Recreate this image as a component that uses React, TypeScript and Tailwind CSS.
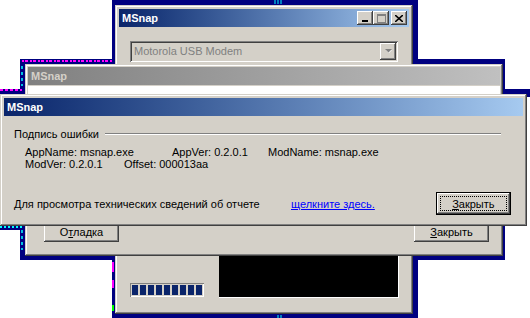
import React from "react";

const raised =
  "shadow-[inset_-1px_-1px_#404040,inset_1px_1px_#d4d0c8,inset_-2px_-2px_#808080,inset_2px_2px_#ffffff]";
const btn =
  "shadow-[inset_-1px_-1px_#404040,inset_1px_1px_#ffffff,inset_-2px_-2px_#808080,inset_2px_2px_#d4d0c8]";
const sunken =
  "shadow-[inset_1px_1px_#808080,inset_-1px_-1px_#ffffff,inset_2px_2px_#404040,inset_-2px_-2px_#d4d0c8]";

function Caption({ active = true }: { active?: boolean }) {
  return (
    <div
      className={`h-[18px] flex items-center pl-[3px] pr-[2px] ${
        active
          ? "bg-gradient-to-r from-[#0a246a] to-[#a6caf0]"
          : "bg-gradient-to-r from-[#808080] to-[#c0c0c0]"
      }`}
    >
      <span
        className={`text-[11px] font-bold leading-none ${
          active ? "text-white" : "text-[#d4d0c8]"
        }`}
      >
        MSnap
      </span>
    </div>
  );
}

function TitleBtn({ children, gap = false }: { children: React.ReactNode; gap?: boolean }) {
  return (
    <div
      className={`w-[16px] h-[14px] bg-[#d4d0c8] flex items-center justify-center ${btn} ${gap ? "ml-[2px]" : ""}`}
    >
      {children}
    </div>
  );
}

function BackWindow() {
  return (
    <div className={`absolute left-[115px] top-[5px] w-[298px] h-[309px] bg-[#d4d0c8] p-[4px] ${raised}`}>
      <div className="h-[18px] flex items-center justify-between pl-[3px] pr-[2px] bg-gradient-to-r from-[#0a246a] to-[#a6caf0]">
        <span className="text-[11px] font-bold leading-none text-white">MSnap</span>
        <div className="flex">
          <TitleBtn>
            <div className="w-[6px] h-[2px] bg-black mt-[6px] -ml-[1px]" />
          </TitleBtn>
          <TitleBtn>
            <div className="w-[9px] h-[9px] border border-[#808080] border-t-2" />
          </TitleBtn>
          <TitleBtn gap>
            <svg width="8" height="7" viewBox="0 0 8 7">
              <path d="M0 0l8 7M8 0L0 7" stroke="#000" strokeWidth="1.6" />
            </svg>
          </TitleBtn>
        </div>
      </div>
      <div className={`mt-[14px] ml-[11px] w-[268px] h-[21px] bg-[#d4d0c8] flex items-center justify-between pl-[4px] pr-[2px] ${sunken}`}>
        <span className="text-[11px] text-[#808080]">Motorola USB Modem</span>
        <div className={`w-[16px] h-[17px] bg-[#d4d0c8] flex items-center justify-center ${btn}`}>
          <svg width="7" height="5" viewBox="0 0 7 5">
            <path d="M1 1h6L4 4z" fill="#fff" />
            <path d="M0 0h7L3.5 3.5z" fill="#808080" />
          </svg>
        </div>
      </div>
      <div className="absolute left-[15px] top-[278px] w-[74px] h-[14px] p-[2px] shadow-[inset_1px_1px_#808080,inset_-1px_-1px_#ffffff] flex gap-[2px]">
        {Array.from({ length: 9 }).map((_, i) => (
          <div key={i} className="w-[6px] h-full bg-[#0a246a]" />
        ))}
      </div>
      <div className="absolute left-[104px] top-[230px] w-[180px] h-[63px] bg-black shadow-[inset_-1px_-1px_#ffffff]" />
    </div>
  );
}

function MiddleWindow() {
  return (
    <div className={`absolute left-[25px] top-[64px] w-[478px] h-[192px] bg-[#d4d0c8] p-[3px] ${raised}`}>
      <Caption active={false} />
      <div className="h-[10px] bg-white mt-[1px]" />
      <div className={`absolute left-[19px] top-[152px] w-[75px] h-[26px] flex items-end justify-center pb-[4px] ${btn}`}>
        <span className="text-[11px] leading-none text-black">
          О<span className="underline">т</span>ладка
        </span>
      </div>
      <div className={`absolute left-[389px] top-[152px] w-[75px] h-[26px] flex items-end justify-center pb-[4px] ${btn}`}>
        <span className="text-[11px] leading-none text-black">
          <span className="underline">З</span>акрыть
        </span>
      </div>
    </div>
  );
}

function ErrorDialog() {
  return (
    <div className={`absolute left-0 top-[94px] w-[527px] h-[132px] bg-[#d4d0c8] p-[4px] ${raised}`}>
      <Caption />
      <div className="relative text-[11px] leading-[12px] text-black">
        <div className="flex items-center mt-[12px] ml-[10px]">
          <span>Подпись ошибки</span>
          <div className="ml-[6px] w-[396px] h-[2px] border-t border-[#808080] border-b border-b-white" />
        </div>
        <div className="flex mt-[6px] ml-[21px]">
          <span className="w-[147px]">AppName: msnap.exe</span>
          <span className="w-[96px]">AppVer: 0.2.0.1</span>
          <span>ModName: msnap.exe</span>
        </div>
        <div className="flex ml-[21px]">
          <span className="w-[99px]">ModVer: 0.2.0.1</span>
          <span>Offset: 000013aa</span>
        </div>
        <div className="flex items-center mt-[22px] ml-[10px]">
          <span className="w-[277px]">Для просмотра технических сведений об отчете</span>
          <span className="text-[#0000ff] underline">щелкните здесь.</span>
          <div className="ml-[61px] w-[75px] h-[23px] border border-black">
            <div className={`w-full h-full p-[3px] ${btn}`}>
              <div className="w-full h-full border border-dotted border-black flex items-center justify-center">
                <span>
                  <span className="underline">З</span>акрыть
                </span>
              </div>
            </div>
          </div>
        </div>
      </div>
    </div>
  );
}

export default function App() {
  return (
    <div className="relative w-[530px] h-[318px] bg-white overflow-hidden font-['Liberation_Sans',Arial,sans-serif]">
      {/* selection frames behind the windows */}
      <div className="absolute left-[112px] top-0 w-[306px] h-[318px] bg-[#000080]" />
      <div className="absolute left-[20px] top-[59px] w-[485px] h-[201px] bg-[#000080]" />
      <div className="absolute left-0 top-[89px] w-[530px] h-[8px] bg-[#000080]" />
      <div className="absolute left-0 top-[225px] w-[25px] h-[5px] bg-[#000080]" />
      <svg className="absolute left-0 top-0" width="530" height="318">
        <path d="M22 61h90" stroke="#ff00ff" strokeWidth="2" strokeDasharray="2 1 3 2" />
        <path d="M0 90h22" stroke="#ff00ff" strokeWidth="2" strokeDasharray="3 2" />
        <path d="M0 227h22" stroke="#00ffff" strokeWidth="2" strokeDasharray="2 2" />
        <path d="M22 66v20M22 230v20" stroke="#00ffff" strokeWidth="1.5" strokeDasharray="3 3" />
        <path d="M113 262v10M113 280v8" stroke="#ff00ff" strokeWidth="2" />
        <path d="M113 305v6" stroke="#00ff00" strokeWidth="2" />
        <path d="M275 0v4M278 0v4M281 0v4" stroke="#00ffff" strokeWidth="1" />
        <path d="M278 315v3M281 315v3" stroke="#00ffff" strokeWidth="1" />
      </svg>
      <BackWindow />
      <MiddleWindow />
      <ErrorDialog />
    </div>
  );
}
